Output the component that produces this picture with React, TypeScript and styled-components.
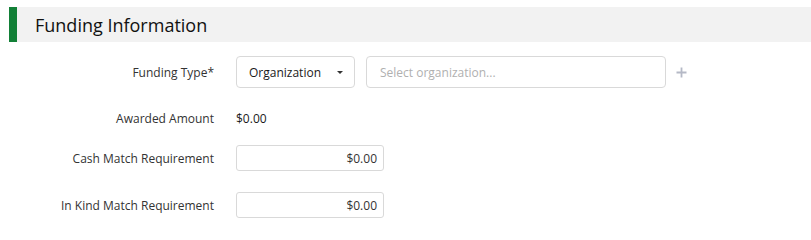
import styled, { createGlobalStyle } from "styled-components";

const GlobalStyle = createGlobalStyle`
    body {
        margin: 0;
        background: #ffffff;
        font-family: "Open Sans", "Noto Sans", sans-serif;
        color: #333333;
    }
`;

const fields = [
    { label: "Cash Match Requirement", value: "$0.00", top: 14 },
    { label: "In Kind Match Requirement", value: "$0.00", top: 21 },
];

const App = () => {
    return (
        <>
            <GlobalStyle />
            <Section>
                <Header>Funding Information</Header>
                <Form>
                    <Row $top={14}>
                        <Label>Funding Type*</Label>
                        <Controls>
                            <Dropdown>
                                <span>Organization</span>
                                <Caret />
                            </Dropdown>
                            <SearchBox>Select organization...</SearchBox>
                            <AddButton>
                                <svg width="11" height="11" viewBox="0 0 11 11">
                                    <path d="M5.5 0.5v10M0.5 5.5h10" stroke="#b5b9c6" strokeWidth="1.8" fill="none" />
                                </svg>
                            </AddButton>
                        </Controls>
                    </Row>
                    <Row $top={17}>
                        <Label>Awarded Amount</Label>
                        <Value>$0.00</Value>
                    </Row>
                    {fields.map((field, index) => (
                        <Row key={index} $top={field.top}>
                            <Label>{field.label}</Label>
                            <MoneyInput>{field.value}</MoneyInput>
                        </Row>
                    ))}
                </Form>
            </Section>
        </>
    );
};

export default App;

const Section = styled.div`
    display: flex;
    flex-direction: column;
    padding: 7px 0 0 9px;
`;

const Header = styled.div`
    display: flex;
    align-items: center;
    height: 35px;
    padding-left: 18px;
    border-left: 8px solid #128037;
    background-color: #f2f2f2;
    font-size: 18px;
    color: #111111;
`;

const Form = styled.div`
    display: flex;
    flex-direction: column;
`;

const Row = styled.div<{ $top: number }>`
    display: grid;
    grid-template-columns: 205px 1fr;
    column-gap: 22px;
    align-items: center;
    min-height: 26px;
    margin-top: ${(p) => p.$top}px;
`;

const Label = styled.div`
    text-align: right;
    font-size: 12px;
    color: #333333;
`;

const Controls = styled.div`
    display: flex;
    align-items: center;
`;

const Dropdown = styled.div`
    box-sizing: border-box;
    display: flex;
    align-items: center;
    justify-content: space-between;
    width: 119px;
    height: 32px;
    padding: 0 11px 0 12px;
    border: 1px solid #d9d9d9;
    border-radius: 4px;
    font-size: 12px;
    color: #1a1a1a;
`;

const Caret = styled.span`
    width: 0;
    height: 0;
    border-left: 3px solid transparent;
    border-right: 3px solid transparent;
    border-top: 3px solid #333333;
`;

const SearchBox = styled.div`
    box-sizing: border-box;
    display: flex;
    align-items: center;
    width: 300px;
    height: 32px;
    margin-left: 11px;
    padding-left: 13px;
    border: 1px solid #d9d9d9;
    border-radius: 4px;
    font-size: 12px;
    color: #b0b0b0;
`;

const AddButton = styled.div`
    display: flex;
    margin-left: 10px;
`;

const Value = styled.div`
    font-size: 12px;
    color: #1a1a1a;
`;

const MoneyInput = styled.div`
    box-sizing: border-box;
    display: flex;
    align-items: center;
    justify-content: flex-end;
    width: 148px;
    height: 26px;
    padding-right: 6px;
    border: 1px solid #d9d9d9;
    border-radius: 3px;
    font-size: 12px;
    color: #333333;
`;
